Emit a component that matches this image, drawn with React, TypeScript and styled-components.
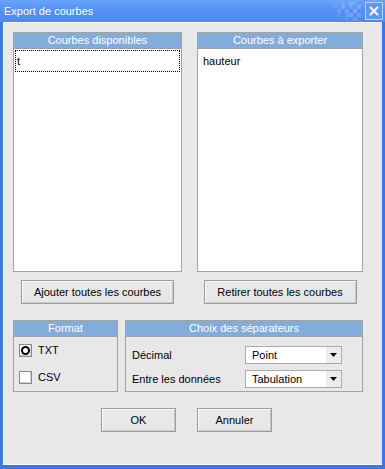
import React from 'react';
import styled, { createGlobalStyle } from 'styled-components';

const GlobalStyle = createGlobalStyle`
  html, body {
    margin: 0;
    padding: 0;
    background: #3a78e6;
  }
  body {
    font-family: "Liberation Sans", Arial, sans-serif;
    font-size: 11px;
    color: #000;
  }
`;

const Frame = styled.div`
  width: 385px;
  height: 469px;
  box-sizing: border-box;
  display: flex;
  flex-direction: column;
  background: #3a78e6;
`;

const TitleBar = styled.div`
  height: 22px;
  flex: none;
  display: flex;
  align-items: center;
  padding-left: 4px;
  background: linear-gradient(#6ba4fa, #5892f6 40%, #4d88f2);
  color: #fff;
  font-size: 11px;
`;

const Title = styled.span`
  flex: 1;
  margin-top: -1px;
`;

const Pattern = styled.svg`
  display: block;
  margin-right: 4px;
`;

const CloseButton = styled.div`
  width: 16px;
  height: 16px;
  margin-right: 2px;
  border: 1px solid #b9d2fb;
  background: #5e97f5;
  display: flex;
  align-items: center;
  justify-content: center;
`;

const Body = styled.div`
  flex: 1;
  margin: 0 3px 4px 3px;
  background: #e8e8e8;
  border-top: 1px solid #f6f6f6;
  border-left: 1px solid #f6f6f6;
  border-bottom: 1px solid #fafafa;
  padding: 9px 0 0 9px;
  display: flex;
  flex-direction: column;
`;

const TwoCols = styled.div`
  display: grid;
  grid-template-columns: 169px 166px;
  column-gap: 15px;
`;

const Panel = styled.div<{ $height: number }>`
  height: ${p => p.$height}px;
  box-sizing: border-box;
  border: 1px solid #a3a3a3;
  display: flex;
  flex-direction: column;
`;

const Header = styled.div`
  height: 15px;
  flex: none;
  line-height: 15px;
  background: #82acdc;
  color: #fff;
  text-align: center;
  border-bottom: 1px solid #a3a3a3;
`;

const List = styled.div`
  flex: 1;
  background: #fff;
  padding: 1px;
`;

const Item = styled.div<{ $focused?: boolean }>`
  height: 22px;
  box-sizing: border-box;
  line-height: 20px;
  padding-left: ${p => (p.$focused ? 1 : 3)}px;
  border: 1px ${p => (p.$focused ? 'dotted #000' : 'solid transparent')};
`;

const ButtonRow = styled(TwoCols)`
  margin-top: 8px;
`;

const Button = styled.div<{ $width: number }>`
  width: ${p => p.$width}px;
  height: 24px;
  box-sizing: border-box;
  justify-self: center;
  border: 1px solid #9c9c9c;
  box-shadow: inset 1px 1px #fbfbfb, inset -1px -1px #c9c9c9;
  background: #e8e8e8;
  display: flex;
  align-items: center;
  justify-content: center;
`;

const BottomRow = styled.div`
  margin-top: 16px;
  display: grid;
  grid-template-columns: 105px 238px;
  column-gap: 7px;
`;

const Option = styled.div`
  display: flex;
  align-items: center;
  gap: 6px;
  padding-left: 5px;
  height: 14px;
`;

const Options = styled.div`
  display: flex;
  flex-direction: column;
  gap: 13px;
  padding-top: 6px;
`;

const Box = styled.div`
  width: 13px;
  height: 13px;
  box-sizing: border-box;
  border: 1px solid #8a8a8a;
  box-shadow: inset -1px -1px #d0d0d0;
  background: #fff;
  display: flex;
  align-items: center;
  justify-content: center;
`;

const Dot = styled.div`
  width: 5px;
  height: 5px;
  border: 2px solid #000;
  border-radius: 50%;
`;

const Fields = styled.div`
  display: grid;
  grid-template-columns: 113px 97px;
  row-gap: 6px;
  padding: 9px 0 0 6px;
  align-items: center;
`;

const Combo = styled.div`
  height: 18px;
  box-sizing: border-box;
  border: 1px solid #ababab;
  background: #fff;
  display: flex;
  align-items: stretch;
`;

const ComboText = styled.span`
  flex: 1;
  padding-left: 6px;
  line-height: 16px;
`;

const Arrow = styled.div`
  width: 15px;
  background: #ececec;
  display: flex;
  align-items: center;
  justify-content: center;
`;

const Actions = styled.div`
  margin-top: 16px;
  display: flex;
  gap: 21px;
  padding-left: 88px;
`;

const squares: [number, number, number][] = [
  [0, 4, 0.2], [4, 8, 0.3], [8, 0, 0.25], [8, 4, 0.4], [12, 8, 0.35], [12, 12, 0.25],
  [16, 0, 0.4], [16, 4, 0.3], [16, 12, 0.45], [20, 8, 0.5], [20, 0, 0.25], [24, 4, 0.45],
  [24, 12, 0.35], [4, 12, 0.15], [12, 16, 0.2], [20, 16, 0.3],
];

const DropArrow = () => (
  <svg width="7" height="4" viewBox="0 0 7 4">
    <path d="M0 0h7L3.5 4z" fill="#000" />
  </svg>
);

export default function App() {
  return (
    <Frame>
      <GlobalStyle />
      <TitleBar>
        <Title>Export de courbes</Title>
        <Pattern width="28" height="20" viewBox="0 0 28 20">
          {squares.map(([x, y, o], i) => (
            <rect key={i} x={x} y={y} width="4" height="4" fill="#9cc3ff" opacity={o} />
          ))}
        </Pattern>
        <CloseButton>
          <svg width="10" height="10" viewBox="0 0 10 10">
            <path d="M1 1l8 8M9 1l-8 8" stroke="#fff" strokeWidth="2" />
          </svg>
        </CloseButton>
      </TitleBar>
      <Body>
        <TwoCols>
          <Panel $height={240}>
            <Header>Courbes disponibles</Header>
            <List>
              <Item $focused>t</Item>
            </List>
          </Panel>
          <Panel $height={240}>
            <Header>Courbes à exporter</Header>
            <List>
              <Item>hauteur</Item>
            </List>
          </Panel>
        </TwoCols>
        <ButtonRow>
          <Button $width={153}>Ajouter toutes les courbes</Button>
          <Button $width={153}>Retirer toutes les courbes</Button>
        </ButtonRow>
        <BottomRow>
          <Panel $height={72}>
            <Header>Format</Header>
            <Options>
              <Option>
                <Box><Dot /></Box>
                TXT
              </Option>
              <Option>
                <Box />
                CSV
              </Option>
            </Options>
          </Panel>
          <Panel $height={72}>
            <Header>Choix des séparateurs</Header>
            <Fields>
              <span>Décimal</span>
              <Combo>
                <ComboText>Point</ComboText>
                <Arrow><DropArrow /></Arrow>
              </Combo>
              <span>Entre les données</span>
              <Combo>
                <ComboText>Tabulation</ComboText>
                <Arrow><DropArrow /></Arrow>
              </Combo>
            </Fields>
          </Panel>
        </BottomRow>
        <Actions>
          <Button $width={75}>OK</Button>
          <Button $width={75}>Annuler</Button>
        </Actions>
      </Body>
    </Frame>
  );
}
